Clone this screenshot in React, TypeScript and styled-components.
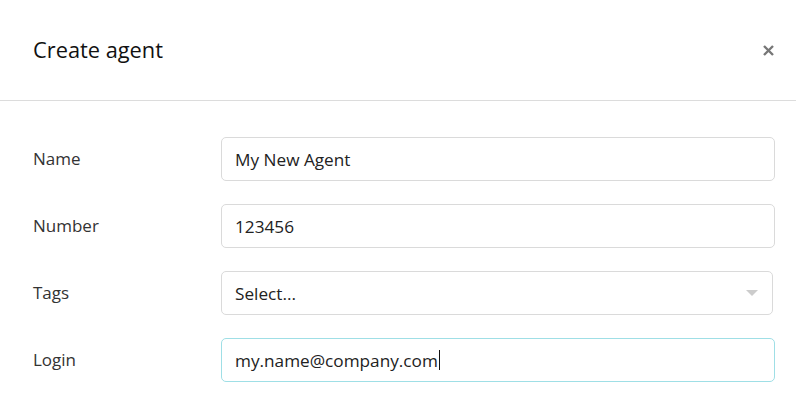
import React from 'react';
import styled, { createGlobalStyle } from 'styled-components';

const GlobalStyle = createGlobalStyle`
  body {
    margin: 0;
    background: #fff;
    font-family: 'Open Sans', 'Liberation Sans', sans-serif;
  }
`;

const Modal = styled.div`
  width: 796px;
  height: 412px;
  overflow: hidden;
  background: #fff;
`;

const Header = styled.div`
  height: 101px;
  display: flex;
  align-items: center;
  justify-content: space-between;
  padding: 0 20px 0 33px;
  border-bottom: 1px solid #dcdcdc;
  box-sizing: border-box;
`;

const Title = styled.h2`
  margin: 0 0 2px;
  font-size: 21.8px;
  font-weight: 500;
  color: #111;
`;

const Close = styled.button`
  border: none;
  background: none;
  padding: 0;
  width: 16px;
  height: 16px;
  display: flex;
  align-items: center;
  justify-content: center;
  cursor: pointer;
`;

const Body = styled.div`
  padding: 36px 21px 0 33px;
  display: flex;
  flex-direction: column;
  gap: 23px;
`;

const Row = styled.div`
  display: grid;
  grid-template-columns: 188px 1fr;
  align-items: center;
`;

const Label = styled.label`
  font-size: 17px;
  color: #333;
  margin-bottom: 1px;
`;

const Field = styled.div<{ $focused?: boolean; $inset?: number }>`
  position: relative;
  height: 44px;
  box-sizing: border-box;
  margin-right: ${(p) => p.$inset ?? 0}px;
  border: 1px solid ${(p) => (p.$focused ? '#9fdfe6' : '#dadada')};
  border-radius: 5px;
  display: flex;
  align-items: center;
  padding: 0 13px;
  font-size: 17.2px;
  color: #222;
`;

const Caret = styled.span`
  display: inline-block;
  width: 1px;
  height: 20px;
  background: #111;
  vertical-align: middle;
  margin-left: 1px;
`;

const Arrow = styled.span`
  position: absolute;
  right: 14px;
  top: 50%;
  margin-top: -3px;
  width: 0;
  height: 0;
  border-left: 6px solid transparent;
  border-right: 6px solid transparent;
  border-top: 6px solid #ccc;
`;

const App: React.FC = () => {
  return (
    <Modal>
      <GlobalStyle />
      <Header>
        <Title>Create agent</Title>
        <Close aria-label="Close">
          <svg width="11" height="11" viewBox="0 0 11 11">
            <path d="M1 1L10 10M10 1L1 10" stroke="#777" strokeWidth="2.4" />
          </svg>
        </Close>
      </Header>
      <Body>
        <Row>
          <Label>Name</Label>
          <Field>My New Agent</Field>
        </Row>
        <Row>
          <Label>Number</Label>
          <Field>123456</Field>
        </Row>
        <Row>
          <Label>Tags</Label>
          <Field $inset={2}>
            Select...
            <Arrow />
          </Field>
        </Row>
        <Row>
          <Label>Login</Label>
          <Field $focused>
            my.name@company.com
            <Caret />
          </Field>
        </Row>
      </Body>
    </Modal>
  );
};

export default App;
